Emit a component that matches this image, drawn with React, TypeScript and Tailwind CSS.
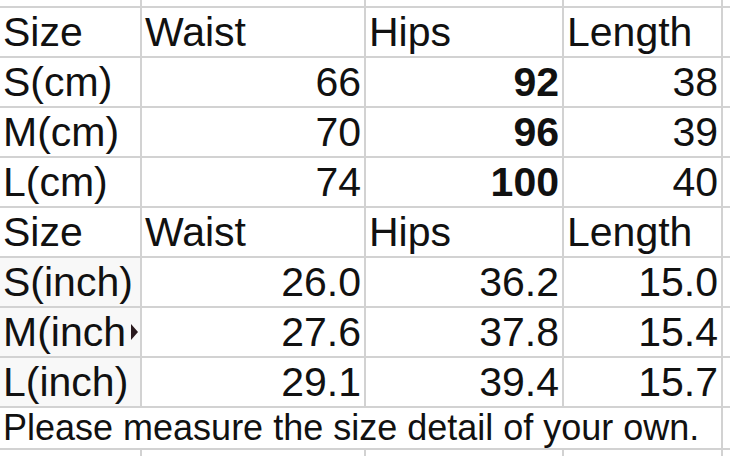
import React from "react";

const rows = [
  { label: "Size", cells: ["Waist", "Hips", "Length"], head: true },
  { label: "S(cm)", cells: ["66", "92", "38"] },
  { label: "M(cm)", cells: ["70", "96", "39"] },
  { label: "L(cm)", cells: ["74", "100", "40"] },
  { label: "Size", cells: ["Waist", "Hips", "Length"], head: true },
  { label: "S(inch)", cells: ["26.0", "36.2", "15.0"], inch: true },
  { label: "M(inch", cells: ["27.6", "37.8", "15.4"], inch: true, cut: true },
  { label: "L(inch)", cells: ["29.1", "39.4", "15.7"], inch: true },
];

const App = () => {
  return (
    <div
      className="w-[730px] h-[456px] overflow-hidden bg-white text-[#111]"
      style={{ fontFamily: '"Liberation Sans", Arial, sans-serif' }}
    >
      <div className="grid grid-cols-[140px_222px_196px_157px_7px] grid-rows-[6px_repeat(8,48px)_40px_20px] gap-[2px] bg-[#d2d2d2]">
        {/* partial row above */}
        <div className="bg-white" />
        <div className="bg-white" />
        <div className="bg-white" />
        <div className="bg-white" />
        <div className="bg-white" />

        {rows.map((r, ri) => (
          <React.Fragment key={ri}>
            <div
              className={
                "relative px-[3px] pt-[2px] text-[41px] leading-[45px] whitespace-nowrap overflow-hidden " +
                (r.inch ? "bg-[#f8f8f8]" : "bg-white")
              }
            >
              {r.label}
              {r.cut && (
                <span className="absolute right-[2px] top-[16px] w-0 h-0 border-y-[8px] border-y-transparent border-l-[7px] border-l-[#2a1a1e]" />
              )}
            </div>
            {r.cells.map((c, ci) => (
              <div
                key={ci}
                className={
                  "bg-white px-[3px] pt-[2px] text-[41px] leading-[45px] whitespace-nowrap " +
                  (r.head ? "text-left" : "text-right") +
                  (!r.head && ci === 1 && ri < 4 ? " font-bold" : "")
                }
              >
                {c}
              </div>
            ))}
            <div className="bg-white" />
          </React.Fragment>
        ))}

        <div className="col-span-4 bg-white px-[3px] text-[36px] leading-[40px] whitespace-nowrap">
          Please measure the size detail of your own.
        </div>
        <div className="bg-white" />

        <div className="bg-white" />
        <div className="bg-white" />
        <div className="bg-white" />
        <div className="bg-white" />
        <div className="bg-white" />
      </div>
    </div>
  );
};

export default App;
